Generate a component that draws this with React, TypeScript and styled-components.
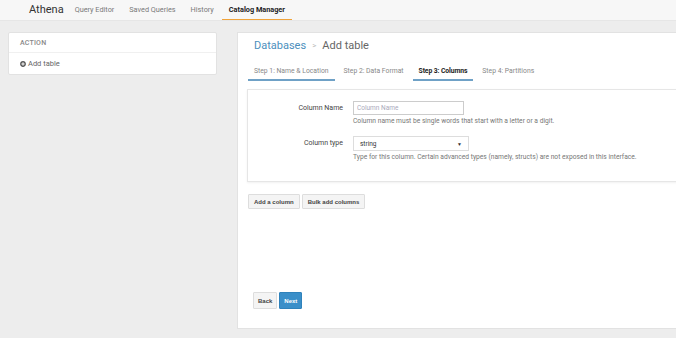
import React from 'react';
import styled, { createGlobalStyle } from 'styled-components';
import { FaPlusCircle } from 'react-icons/fa';

const GlobalStyle = createGlobalStyle`
  html, body {
    margin: 0;
    padding: 0;
    background: #ededed;
    font-family: Roboto, 'Liberation Sans', Arial, sans-serif;
    overflow: hidden;
  }
  * {
    box-sizing: border-box;
  }
`;

const Shell = styled.div`
  width: 676px;
  height: 338px;
  display: flex;
  flex-direction: column;
  overflow: hidden;
`;

const Header = styled.header`
  height: 21px;
  background: #f7f7f7;
  border-bottom: 1px solid #e6e6e6;
  display: flex;
  align-items: stretch;
  padding-left: 29px;
`;

const Brand = styled.div`
  font-size: 11px;
  color: #333;
  display: flex;
  align-items: center;
  margin-right: 4px;
  padding-bottom: 1px;
`;

const NavItem = styled.div<{ $active?: boolean }>`
  display: flex;
  align-items: center;
  padding: 0 7px;
  margin-right: 1px;
  font-size: 7.3px;
  color: ${({ $active }) => ($active ? '#222' : '#7a7a7a')};
  font-weight: ${({ $active }) => ($active ? 700 : 400)};
  border-bottom: 1px solid
    ${({ $active }) => ($active ? '#f0a33a' : 'transparent')};
`;

const Body = styled.div`
  flex: 1;
  display: flex;
  align-items: flex-start;
  padding: 11px 0 0 8px;
  gap: 20px;
`;

const Sidebar = styled.aside`
  width: 209px;
  background: #fff;
  border: 1px solid #e2e2e2;
  border-radius: 2px;
`;

const SideHead = styled.div`
  height: 20px;
  display: flex;
  align-items: center;
  padding-left: 11px;
  font-size: 7px;
  font-weight: 500;
  color: #888;
  letter-spacing: 0.2px;
  border-bottom: 1px solid #f0f0f0;
`;

const SideLink = styled.div`
  height: 21px;
  display: flex;
  align-items: center;
  gap: 2px;
  padding-left: 11px;
  font-size: 7.5px;
  color: #666;
  svg {
    color: #555;
  }
`;

const Main = styled.main`
  flex: 1;
  margin-right: -14px;
  height: 297px;
  background: #fff;
  border: 1px solid #e2e2e2;
  display: flex;
  flex-direction: column;
  padding-left: 10px;
`;

const Crumbs = styled.h2`
  margin: 6px 0 0 6px;
  font-size: 11px;
  font-weight: 400;
  line-height: 14px;
  color: #666;
  display: flex;
  gap: 6px;
  span:first-child {
    color: #4c8fbd;
  }
  span:nth-child(2) {
    color: #bbb;
    font-size: 8px;
  }
`;

const Tabs = styled.nav`
  display: flex;
  gap: 3px;
  margin-top: 10px;
`;

const Tab = styled.div<{ $active?: boolean; $done?: boolean }>`
  padding: 4px 6px 3px;
  font-size: 6.8px;
  line-height: 9px;
  color: ${({ $active }) => ($active ? '#222' : '#888')};
  font-weight: ${({ $active }) => ($active ? 700 : 400)};
  letter-spacing: ${({ $active }) => ($active ? '-0.1px' : '0')};
  border-bottom: 2px solid
    ${({ $active, $done }) =>
      $active || $done ? '#6fa1c6' : 'transparent'};
`;

const FormCard = styled.section`
  margin-top: 8px;
  margin-left: -1px;
  border: 1px solid #e6e6e6;
  box-shadow: 0 1px 2px rgba(0, 0, 0, 0.06);
  padding: 11px 0 19px;
  display: flex;
  flex-direction: column;
  gap: 10px;
`;

const Row = styled.div`
  display: grid;
  grid-template-columns: 95px 1fr;
  column-gap: 10px;
`;

const Label = styled.div`
  text-align: right;
  font-size: 7px;
  font-weight: 400;
  color: #444;
  line-height: 15px;
`;

const Field = styled.div`
  display: flex;
  flex-direction: column;
  align-items: flex-start;
`;

const Input = styled.input`
  width: 111px;
  height: 14px;
  border: 1px solid #ccc;
  padding: 0 3px;
  font-family: inherit;
  font-size: 6.5px;
  outline: none;
  &::placeholder {
    color: #aab;
  }
`;

const SelectBox = styled.div`
  position: relative;
  width: 116px;
  height: 15px;
  border: 1px solid #ddd;
  background: #fff;
  padding: 0 6px;
  display: flex;
  align-items: center;
  font-size: 6.5px;
  color: #333;
`;

const Caret = styled.span`
  position: absolute;
  right: 6px;
  top: 4px;
  font-size: 5px;
  color: #333;
`;

const Help = styled.p`
  margin: 2px 0 0;
  font-size: 6.7px;
  line-height: 9px;
  color: #777;
`;

const ButtonRow = styled.div<{ $indent?: number; $top?: number }>`
  display: flex;
  gap: 2px;
  margin-left: ${({ $indent }) => $indent ?? 0}px;
  margin-top: ${({ $top }) => $top ?? 0}px;
`;

const Button = styled.button<{ $primary?: boolean }>`
  height: 15px;
  padding: 0 5px;
  font-family: 'Liberation Sans', Arial, sans-serif;
  font-size: 6px;
  font-weight: 700;
  border-radius: 1px;
  border: 1px solid ${({ $primary }) => ($primary ? '#2f82bb' : '#ddd')};
  background: ${({ $primary }) => ($primary ? '#3a8fc9' : '#f4f4f4')};
  color: ${({ $primary }) => ($primary ? '#fff' : '#444')};
`;

const Footer = styled.div`
  margin-top: auto;
  padding: 0 0 19px;
  ${Button} {
    height: 17px;
    padding: 0 4px;
  }
`;

export default function App() {
  return (
    <>
      <GlobalStyle />
      <Shell>
        <Header>
          <Brand>Athena</Brand>
          <NavItem>Query Editor</NavItem>
          <NavItem>Saved Queries</NavItem>
          <NavItem>History</NavItem>
          <NavItem $active>Catalog Manager</NavItem>
        </Header>
        <Body>
          <Sidebar>
            <SideHead>ACTION</SideHead>
            <SideLink>
              <FaPlusCircle size={6} /> Add table
            </SideLink>
          </Sidebar>
          <Main>
            <Crumbs>
              <span>Databases</span>
              <span>&gt;</span>
              <span>Add table</span>
            </Crumbs>
            <Tabs>
              <Tab $done>Step 1: Name &amp; Location</Tab>
              <Tab>Step 2: Data Format</Tab>
              <Tab $active>Step 3: Columns</Tab>
              <Tab>Step 4: Partitions</Tab>
            </Tabs>
            <FormCard>
              <Row>
                <Label>Column Name</Label>
                <Field>
                  <Input placeholder="Column Name" />
                  <Help>
                    Column name must be single words that start with a letter or
                    a digit.
                  </Help>
                </Field>
              </Row>
              <Row>
                <Label>Column type</Label>
                <Field>
                  <SelectBox>
                    string
                    <Caret>▼</Caret>
                  </SelectBox>
                  <Help>
                    Type for this column. Certain advanced types (namely,
                    structs) are not exposed in this interface.
                  </Help>
                </Field>
              </Row>
            </FormCard>
            <ButtonRow $top={12}>
              <Button>Add a column</Button>
              <Button>Bulk add columns</Button>
            </ButtonRow>
            <Footer>
              <ButtonRow $indent={5}>
                <Button>Back</Button>
                <Button $primary>Next</Button>
              </ButtonRow>
            </Footer>
          </Main>
        </Body>
      </Shell>
    </>
  );
}
